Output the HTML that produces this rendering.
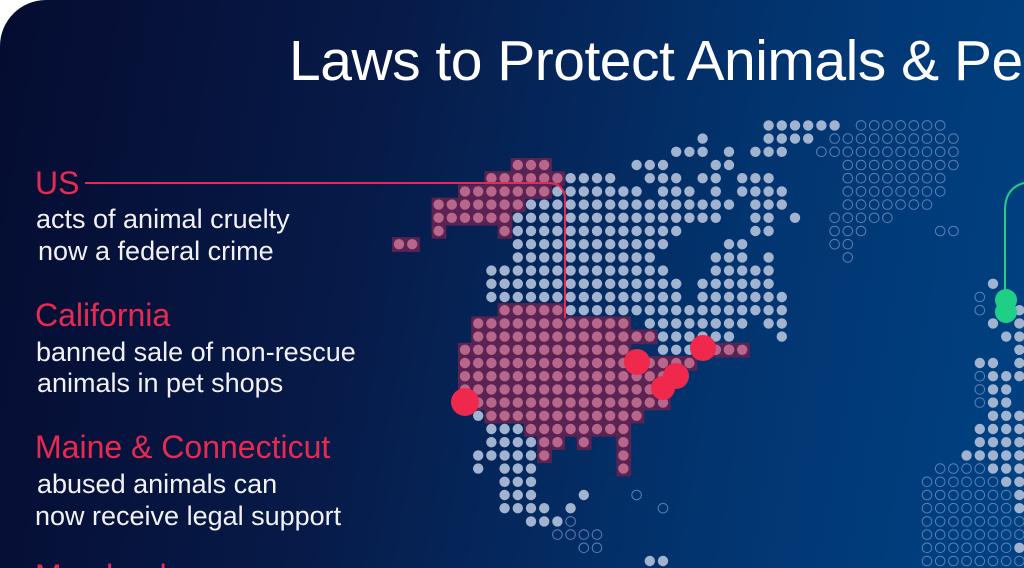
<!DOCTYPE html>
<html><head><meta charset="utf-8"><style>
html,body{margin:0;padding:0;background:#fff;width:1024px;height:568px;overflow:hidden}
#card{position:absolute;left:0;top:0;width:1024px;height:568px;border-top-left-radius:46px;overflow:hidden;
background:linear-gradient(100deg,#050c30 0%,#071a48 35%,#02346f 70%,#004283 100%)}
.t{position:absolute;font-family:"Liberation Sans",sans-serif;white-space:nowrap}
.title{left:289px;top:28px;font-size:57px;color:#fff;letter-spacing:-0.5px}
.red{color:#e82a50;font-size:32px}
.w{color:#f2f2f6;font-size:27px}
svg{position:absolute;left:0;top:0}
</style></head><body><div id="card">
<svg id="map" width="1024" height="568"></svg>
<div class="t title">Laws to Protect Animals &amp; Pe</div>
<div class="t red" style="left:35px;top:165px">US</div>
<div class="t w" style="left:36px;top:204px">acts of animal cruelty</div>
<div class="t w" style="left:38px;top:236px">now a federal crime</div>
<div class="t red" style="left:35px;top:297px">California</div>
<div class="t w" style="left:36px;top:337px">banned sale of non-rescue</div>
<div class="t w" style="left:37px;top:368px">animals in pet shops</div>
<div class="t red" style="left:35px;top:429px">Maine &amp; Connecticut</div>
<div class="t w" style="left:37px;top:469px">abused animals can</div>
<div class="t w" style="left:35px;top:501px">now receive legal support</div>
<div class="t red" style="left:35px;top:558px">Maryland</div>
</div>
<script>
var P=13.2,X0=399,Y0=165;
var d=[
[-3,'b',28,33],[-3,'o',35,41],
[-2,'b',23,23],[-2,'b',28,31],[-2,'o',33,42],
[-1,'b',21,23],[-1,'b',25,25],[-1,'b',27,29],[-1,'o',32,42],
[0,'p',9,11],[0,'b',18,20],[0,'b',24,25],[0,'o',34,42],
[1,'p',7,12],[1,'b',13,16],[1,'b',19,21],[1,'b',23,24],[1,'b',26,28],[1,'o',34,41],
[2,'p',5,11],[2,'b',12,18],[2,'b',20,22],[2,'b',24,24],[2,'b',26,29],[2,'o',34,41],
[3,'p',3,9],[3,'b',10,25],[3,'b',27,29],[3,'o',34,40],
[4,'p',3,8],[4,'b',9,24],[4,'b',27,28],[4,'b',30,30],[4,'o',33,37],
[5,'p',3,3],[5,'p',8,8],[5,'b',9,21],[5,'b',27,28],[5,'o',33,35],[5,'o',41,42],
[6,'p',0,1],[6,'b',9,20],[6,'b',25,26],[6,'o',33,34],
[7,'b',9,19],[7,'b',24,26],[7,'b',28,28],[7,'o',34,34],
[8,'b',7,20],[8,'b',24,28],
[9,'b',7,21],[9,'b',23,28],[9,'b',45,45],
[10,'b',7,21],[10,'b',23,29],[10,'o',44,44],
[11,'p',8,12],[11,'b',13,29],[11,'o',44,44],[11,'b',47,47],
[12,'p',6,17],[12,'b',19,26],[12,'b',28,29],[12,'b',45,45],[12,'b',47,47],
[13,'p',6,19],[13,'b',20,25],[13,'b',29,29],[13,'b',46,47],
[14,'p',5,17],[14,'b',20,25],[14,'p',24,26],[14,'b',47,47],
[15,'p',5,22],[15,'b',44,45],[15,'b',47,47],
[16,'p',5,20],[16,'o',44,44],[16,'b',45,47],
[17,'p',5,20],[17,'o',44,44],[17,'b',45,46],
[18,'p',6,20],[18,'o',44,44],[18,'b',45,46],
[19,'b',6,6],[19,'p',7,18],[19,'b',45,47],
[20,'b',7,9],[20,'p',10,17],[20,'b',44,47],
[21,'b',7,10],[21,'p',11,12],[21,'p',14,14],[21,'p',17,17],[21,'b',44,47],
[22,'b',6,10],[22,'p',11,11],[22,'p',17,17],[22,'b',43,47],
[23,'b',6,6],[23,'b',8,10],[23,'p',17,17],[23,'o',41,44],[23,'b',45,47],
[24,'b',8,10],[24,'o',40,45],[24,'b',46,47],
[25,'b',8,10],[25,'b',14,14],[25,'o',18,18],[25,'o',40,46],[25,'b',47,47],
[26,'b',8,11],[26,'b',13,13],[26,'o',20,20],[26,'o',40,46],[26,'b',47,47],
[27,'b',10,12],[27,'o',13,13],[27,'o',40,47],
[28,'o',12,15],[28,'o',40,47],
[29,'o',14,15],[29,'o',40,46],[29,'b',47,47],
[30,'b',19,20],[30,'o',40,47]
];
var s='',bg='';
d.forEach(function(r){for(var c=r[2];c<=r[3];c++){var x=X0+c*P,y=Y0+r[0]*P;
if(r[1]=='p'){bg+='<rect x="'+(x-7)+'" y="'+(y-7)+'" width="'+(P+1.5)+'" height="'+(P+1.5)+'" fill="#5a2352"/>';s+='<circle cx="'+x+'" cy="'+y+'" r="5.2" fill="#b7668c"/>';}
else if(r[1]=='b'){s+='<circle cx="'+x+'" cy="'+y+'" r="5.2" fill="#a2b3d0"/>';}
else{s+='<circle cx="'+x+'" cy="'+y+'" r="4.8" fill="none" stroke="#5d80b4" stroke-width="1"/>';}}});
var lines='<path d="M85 183 H548 Q565 183 565 200 V318" fill="none" stroke="#e82a50" stroke-width="2"/>'+
'<path d="M1024 183 Q1005 188 1005 210 V295" fill="none" stroke="#1fcf86" stroke-width="2"/>';
var red='';[[465,402,14],[637,362,13],[703,348,13],[676,376,13],[663,388,12]].forEach(function(a){red+='<circle cx="'+a[0]+'" cy="'+a[1]+'" r="'+a[2]+'" fill="#f0284b"/>';});
red+='<circle cx="1006" cy="300" r="11" fill="#1fcf86"/><circle cx="1006" cy="312" r="11" fill="#1fcf86"/>';
document.getElementById('map').innerHTML=bg+s+lines+red;
</script>
</body></html>
